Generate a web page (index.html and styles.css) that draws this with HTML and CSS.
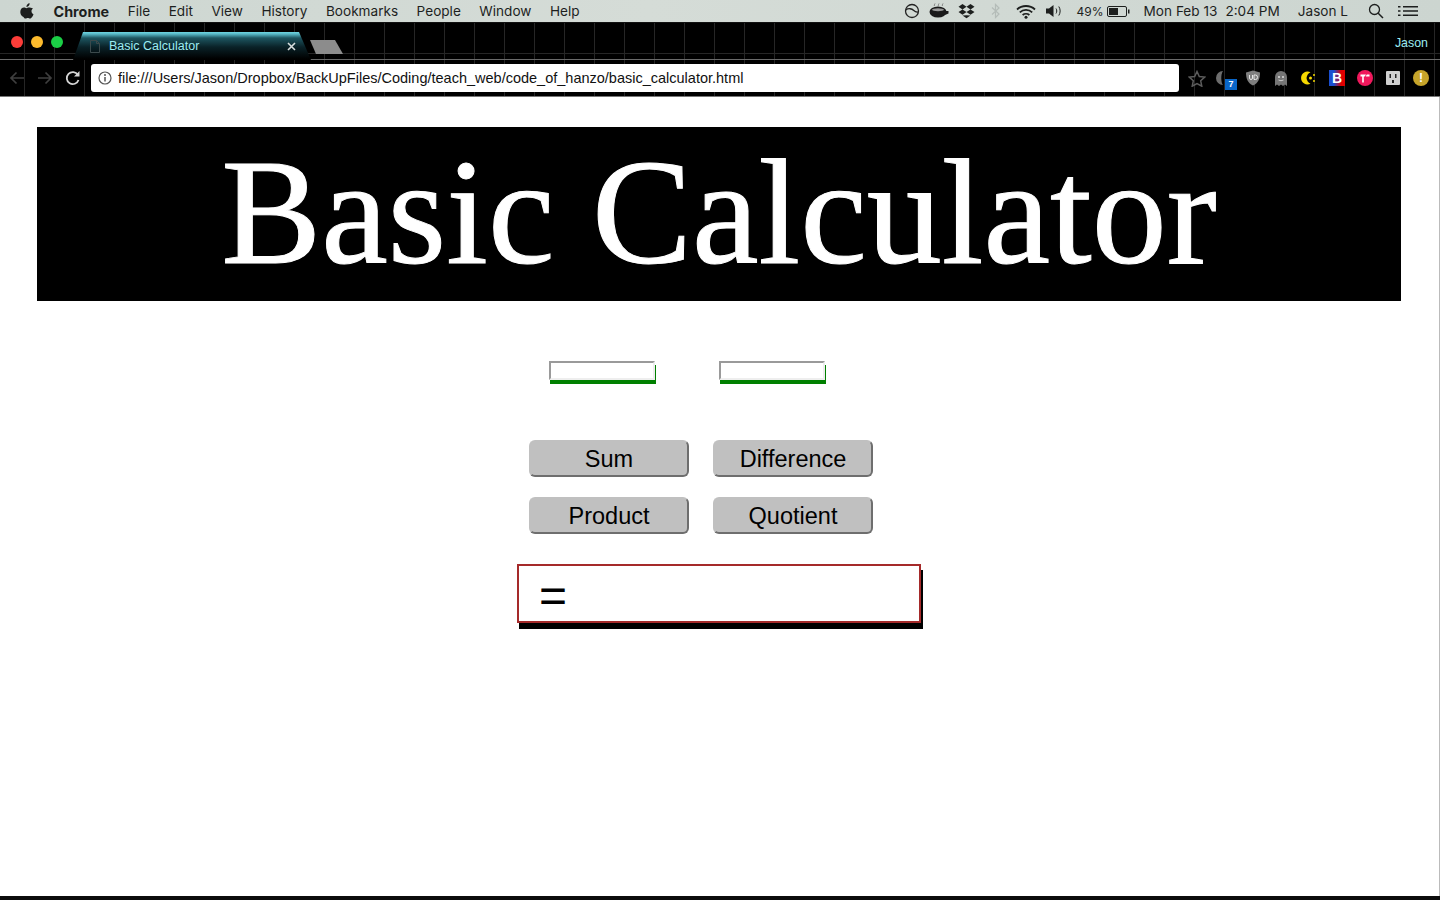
FILE: index.html
```html
<!DOCTYPE html>
<html lang="en">
<head>
    <meta charset="UTF-8">
    <meta name="viewport" content="width=device-width, initial-scale=1.0">
    <title>Basic Calculator</title>
    <link rel="stylesheet" href="styles.css">
</head>
<body>
    <!-- mac menu bar -->
    <div class="menubar">
        <div class="menu-left">
            <svg class="apple" width="14" height="16" viewBox="0 0 14 16"><path d="M9.600 0.300c.1 1-.3 1.900-.8 2.500-.6.700-1.400 1.200-2.300 1.100-.1-.9.3-1.900.8-2.400C7.900.8 8.900.3 9.600.3zM13 5.600c-.9.600-1.500 1.500-1.500 2.700 0 1.400.8 2.400 2 2.900-.3 1-.8 1.900-1.400 2.800-.6.800-1.200 1.600-2.100 1.600-.9 0-1.200-.5-2.200-.5s-1.400.5-2.200.5c-.9 0-1.600-.9-2.200-1.700C1 12.700.3 10.800.3 9c0-2.900 1.900-4.400 3.700-4.400 1 0 1.800.6 2.400.6.600 0 1.500-.7 2.700-.7.500 0 2.500.1 3.900 1.100z" fill="#1d1f1e"/></svg>
            <span class="menu-app">Chrome</span>
            <span>File</span>
            <span>Edit</span>
            <span>View</span>
            <span>History</span>
            <span>Bookmarks</span>
            <span>People</span>
            <span>Window</span>
            <span>Help</span>
        </div>
        <div class="menu-right">
            <svg class="st-sync" width="16" height="16" viewBox="0 0 16 16"><circle cx="8" cy="8" r="6.500" fill="none" stroke="#222" stroke-width="1.300"/><path d="M1.800 7c2.500-2 6-1.500 8 .5 1.200 1.200 2.500 1.800 4.200 1.500" fill="none" stroke="#222" stroke-width="1.300"/></svg>
            <svg class="st-cup" width="20" height="16" viewBox="0 0 20 16"><path d="M5 3c1-1 0-1.500 1-2.500M9 3c1-1 0-1.500 1-2.500M13 3c1-1 0-1.500 1-2.500" fill="none" stroke="#777" stroke-width="1"/><ellipse cx="9" cy="9" rx="8.500" ry="5.500" fill="#1a1a1a"/><ellipse cx="9" cy="6.800" rx="6" ry="1.500" fill="#999"/><path d="M17 8h2.500v2.500L16 12z" fill="#1a1a1a"/></svg>
            <svg class="st-dropbox" width="17" height="16" viewBox="0 0 17 16"><path d="M4.500 1L.5 3.700l4 2.700 4-2.700zM12.500 1l-4 2.700 4 2.700 4-2.700zM.5 9.100l4 2.700 4-2.700-4-2.700zM12.500 6.400l-4 2.700 4 2.700 4-2.700zM4.500 12.600l4 2.700 4-2.700-4-.3-4 .3z" fill="#1d1f1e"/></svg>
            <svg class="st-bt" width="9" height="16" viewBox="0 0 9 16"><path d="M1 4.500l7 6.500-3.500 3.500V1.500L8 5l-7 6.500" fill="none" stroke="#b4bcb8" stroke-width="1.200"/></svg>
            <svg class="st-wifi" width="20" height="15" viewBox="0 0 20 15"><path d="M1 5.500c5-4.700 13-4.700 18 0M3.800 8.300c3.500-3.200 8.900-3.200 12.400 0M6.600 11c1.900-1.600 4.900-1.600 6.800 0" fill="none" stroke="#1d1f1e" stroke-width="1.800"/><circle cx="10" cy="13.300" r="1.500" fill="#1d1f1e"/></svg>
            <svg class="st-vol" width="17" height="14" viewBox="0 0 17 14"><path d="M0 4.500h3L7.500 1v12L3 9.500H0z" fill="#1d1f1e"/><path d="M10 4.500c1 1.500 1 3.500 0 5M12.800 2.500c1.800 2.800 1.800 6.200 0 9" fill="none" stroke="#1d1f1e" stroke-width="1"/></svg>
            <span class="st-pct">49%</span>
            <svg class="st-battery" width="23" height="11" viewBox="0 0 23 11"><rect x=".5" y=".5" width="19" height="10" rx="1.500" fill="none" stroke="#1d1f1e"/><rect x="2" y="2" width="9" height="7" fill="#1d1f1e"/><rect x="21" y="3.500" width="1.500" height="4" fill="#1d1f1e"/></svg>
            <span class="st-date">Mon Feb 13</span>
            <span class="st-time">2:04 PM</span>
            <span class="st-user">Jason L</span>
            <svg class="st-search" width="16" height="16" viewBox="0 0 16 16"><circle cx="6.500" cy="6.500" r="5" fill="none" stroke="#1d1f1e" stroke-width="1.300"/><path d="M10.200 10.200l4.800 4.800" stroke="#1d1f1e" stroke-width="1.500"/></svg>
            <svg class="st-list" width="20" height="12" viewBox="0 0 20 12"><path d="M0 1h2.500v1.500H0zM0 5.200h2.500v1.500H0zM0 9.500h2.500V11H0zM5 1h15v1.500H5zM5 5.200h15v1.500H5zM5 9.500h15V11H5z" fill="#1d1f1e"/></svg>
        </div>
    </div>

    <!-- browser frame -->
    <div class="browser">
        <div class="tabstrip">
            <div class="traffic">
                <i class="dot red"></i>
                <i class="dot yellow"></i>
                <i class="dot green"></i>
            </div>
            <div class="tab">
                <svg class="tab-page" width="10" height="13" viewBox="0 0 10 13"><path d="M.5.5h6l3 3v9H.5zM6.500.5v3h3" fill="none" stroke="#3c4a4c"/></svg>
                <span class="tab-title">Basic Calculator</span>
                <svg class="tab-close" width="9" height="9" viewBox="0 0 9 9"><path d="M1 1l7 7M8 1L1 8" stroke="#d8dede" stroke-width="1.600"/></svg>
            </div>
            <div class="newtab"></div>
            <span class="profile">Jason</span>
        </div>
        <div class="toolbar">
            <div class="tool"><svg width="16" height="14" viewBox="0 0 16 14"><path d="M15 7H2M7.500 1.500L2 7l5.500 5.500" fill="none" stroke="#3f3f3f" stroke-width="1.700"/></svg></div>
            <div class="tool"><svg width="16" height="14" viewBox="0 0 16 14"><path d="M1 7h13M8.500 1.500L14 7l-5.500 5.500" fill="none" stroke="#3f3f3f" stroke-width="1.700"/></svg></div>
            <div class="tool"><svg width="16" height="16" viewBox="0 0 16 16"><path d="M13.500 10a6 6 0 1 1-.6-5" fill="none" stroke="#d6d6d6" stroke-width="1.800"/><path d="M14.500 1v5.500H9z" fill="#d6d6d6"/></svg></div>
            <div class="address">
                <svg class="info" width="14" height="14" viewBox="0 0 14 14"><circle cx="7" cy="7" r="6" fill="none" stroke="#555" stroke-width="1.200"/><path d="M7 6v4.500" stroke="#555" stroke-width="1.500"/><circle cx="7" cy="3.900" r="1" fill="#555"/></svg>
                <span class="url">file:///Users/Jason/Dropbox/BackUpFiles/Coding/teach_web/code_of_hanzo/basic_calculator.html</span>
            </div>
            <div class="extensions">
                <div class="tool"><svg width="18" height="17" viewBox="0 0 18 17"><path d="M9 1.500l2.300 5 5.400.6-4 3.700 1.100 5.400L9 13.500l-4.800 2.700 1.100-5.400-4-3.700 5.400-.6z" fill="none" stroke="#5c5c5c" stroke-width="1.500"/></svg></div>
                <div class="tool ext-moon">
                    <svg width="14" height="16" viewBox="0 0 14 16"><path d="M8 1a7 7 0 0 0 0 14c-2-2-2.500-11 0-14z" fill="#6d6d6d"/></svg>
                    <span class="ext-count">7</span>
                </div>
                <div class="tool"><svg width="14" height="16" viewBox="0 0 14 16"><path d="M7 .5L14 2.500c0 6-1.500 10.500-7 13C1.500 13 0 8.500 0 2.500z" fill="#7f7f7f"/><path d="M3.500 5v3q0 1.500 1.500 1.500T6.500 8V5M8 5v4.500h1.500q2 0 2-2.250T9.500 5z" fill="none" stroke="#e6e6e6" stroke-width="1"/></svg></div>
                <div class="tool"><svg width="12" height="15" viewBox="0 0 12 15"><path d="M0 15V6a6 6 0 0 1 12 0v9l-2-1.500-2 1.500-2-1.500-2 1.500-2-1.500z" fill="#757575"/><circle cx="4" cy="6" r="1" fill="#ddd"/><circle cx="8" cy="6" r="1" fill="#ddd"/><path d="M3.500 9q2.500 1.500 5 0" fill="none" stroke="#ddd" stroke-width=".8"/></svg></div>
                <div class="tool"><svg width="16" height="14" viewBox="0 0 16 14"><path d="M9.500 1.200a6.500 6.500 0 1 0 0 11.600A7.500 7.500 0 0 1 5.500 7a7.500 7.500 0 0 1 4-5.800z" fill="#f6d800"/><circle cx="9.500" cy="7" r="1.500" fill="#f6d800"/><circle cx="13" cy="4" r="1" fill="#f6d800"/><circle cx="13" cy="10" r="1" fill="#f6d800"/></svg></div>
                <div class="tool"><span class="ext-b">B</span></div>
                <div class="tool"><svg width="16" height="16" viewBox="0 0 16 16"><circle cx="8" cy="8" r="8" fill="#f0185c"/><path d="M3.500 4.500h5.500L7.800 6.500H6.800V12.500H5.200V6.500H3.500zM9.800 4.500h2.700v2h-3.800z" fill="#fff"/></svg></div>
                <div class="tool"><svg width="14" height="14" viewBox="0 0 14 14"><rect width="14" height="14" rx="1" fill="#cfcfcf"/><path d="M3.500 3h1.500v4H3.500zM9 3h1.500v4H9zM6 9h2v3H6z" fill="#222"/></svg></div>
                <div class="tool"><span class="ext-round ext-warn">!</span></div>
            </div>
        </div>
    </div>

    <!-- the actual page -->
    <div class="page">
        <h1 class="banner">Basic Calculator</h1>

        <div class="inputs">
            <input type="text" class="num-input">
            <input type="text" class="num-input">
        </div>

        <div class="buttons">
            <button type="button">Sum</button>
            <button type="button">Difference</button>
        </div>
        <div class="buttons second">
            <button type="button">Product</button>
            <button type="button">Quotient</button>
        </div>

        <div class="result">=</div>
    </div>

    <div class="dock-edge"></div>
</body>
</html>
```

FILE: styles.css
```css
html, body {
    margin: 0;
    padding: 0;
    height: 900px;
    overflow: hidden;
    background: #fff;
    font-family: "Liberation Sans", Arial, sans-serif;
}

/* menu bar */
.menubar {
    height: 22px;
    display: flex;
    justify-content: space-between;
    align-items: center;
    background: linear-gradient(90deg, #cdd6d1, #d5dcd7 45%, #ccd5d0);
    color: #1d1f1e;
    font-family: "Inter", "Liberation Sans", sans-serif;
    font-size: 13.6px;
    border-bottom: 1px solid #111;
}
.menu-left {
    display: flex;
    align-items: center;
    gap: 18.5px;
    padding-left: 20px;
}
.apple {
    margin-right: 1px;
}
.menu-app {
    font-weight: 700;
    font-size: 14.4px;
}
.menu-right {
    display: flex;
    align-items: center;
    padding-right: 22px;
}
.st-cup { margin-left: 9px; }
.st-dropbox { margin-left: 9px; }
.st-bt { margin-left: 16px; }
.st-wifi { margin-left: 16px; }
.st-vol { margin-left: 10px; }
.st-pct { margin-left: 14px; font-size: 12px; }
.st-battery { margin-left: 3px; }
.st-date { margin-left: 14px; }
.st-time { margin-left: 8px; }
.st-user { margin-left: 18px; }
.st-search { margin-left: 20px; }
.st-list { margin-left: 14px; }

/* browser frame */
.browser {
    height: 74px;
    box-sizing: border-box;
    background-color: #000;
    background-image:
        repeating-linear-gradient(90deg, transparent 0 24px, #262626 24px 25px, transparent 25px 30px),
        repeating-linear-gradient(180deg, transparent 0 30px, #262626 30px 31px, transparent 31px 60px);
    border-bottom: 1px solid #777;
}
.tabstrip {
    height: 37px;
    box-sizing: border-box;
    display: flex;
    border-bottom: 1px solid #6a6a6a;
}
.traffic {
    display: flex;
    gap: 8px;
    padding: 13px 0 0 11px;
}
.dot {
    width: 12px;
    height: 12px;
    border-radius: 50%;
}
.red { background: #fc3d39; }
.yellow { background: #fdbb2d; }
.green { background: #1bcf46; }
.tab {
    width: 238px;
    height: 28px;
    margin: 9px 0 -1px 10px;
    box-sizing: border-box;
    display: flex;
    align-items: center;
    padding: 0 15px 0 17px;
    clip-path: polygon(0 100%, 10px 0, 226px 0, 238px 100%);
    background: linear-gradient(180deg, #6fd6e2 0, #58b8c6 2px, #1d5560 6px, #0a2228 15px, #000 27px);
}
.tab-page {
    flex: none;
}
.tab-title {
    margin-left: 9px;
    flex: 1;
    color: #9cecf2;
    font-size: 12.5px;
}
.tab-close {
    flex: none;
}
.newtab {
    width: 33px;
    height: 14px;
    margin: 17px 0 0 -1px;
    background: #8c8c8c;
    clip-path: polygon(0 0, 25px 0, 33px 100%, 6px 100%);
}
.profile {
    margin: 13px 12px 0 auto;
    color: #9cecf2;
    font-size: 12.4px;
}
.toolbar {
    height: 36px;
    display: flex;
    align-items: center;
    padding: 0 5px 0 3px;
}
.tool {
    width: 28px;
    height: 28px;
    flex: none;
    display: flex;
    align-items: center;
    justify-content: center;
    position: relative;
}
.address {
    flex: 1;
    height: 28px;
    margin-left: 4px;
    margin-right: 4px;
    box-sizing: border-box;
    display: flex;
    align-items: center;
    padding-left: 7px;
    background: #fff;
    border-radius: 3px;
}
.url {
    margin-left: 6px;
    color: #111;
    font-size: 14.5px;
    white-space: nowrap;
}
.extensions {
    display: flex;
}
.ext-moon svg {
    margin-left: -6px;
}
.ext-count {
    position: absolute;
    left: 14px;
    top: 15px;
    width: 12px;
    height: 11px;
    background: #0a66c8;
    color: #fff;
    font-size: 9px;
    font-weight: 700;
    line-height: 11px;
    text-align: center;
}
.ext-b {
    width: 16px;
    height: 16px;
    background: linear-gradient(90deg, #1a4fd0, #1a4fd0 30%, #e00000 75%);
    color: #fff;
    font-size: 14px;
    font-weight: 700;
    line-height: 16px;
    text-align: center;
}
.ext-round {
    width: 16px;
    height: 16px;
    border-radius: 50%;
    color: #fff;
    font-size: 12px;
    font-weight: 700;
    line-height: 16px;
    text-align: center;
}
.ext-warn { background: #c6a42a; }

/* calculator page */
.page {
    width: 1440px;
    height: 799px;
    box-sizing: border-box;
    padding: 30px 38px 0 37px;
    border-right: 1px solid #bbb;
    background: #fff;
}
.banner {
    margin: 0;
    height: 174px;
    background: #000;
    color: #fff;
    font-family: "Liberation Serif", "Times New Roman", serif;
    font-size: 150px;
    font-weight: 400;
    line-height: 171px;
    text-align: center;
    -webkit-text-stroke: 1px #fff;
}
.inputs {
    display: flex;
    gap: 64px;
    margin: 60px 0 0 512px;
}
.num-input {
    width: 106px;
    height: 19px;
    box-sizing: border-box;
    padding: 0;
    border: 2px solid #eee;
    border-top-color: #9a9a9a;
    border-left-color: #9a9a9a;
    background: #fff;
    box-shadow: 1px 4px 0 green;
}
.buttons {
    display: flex;
    gap: 24px;
    margin: 60px 0 0 492px;
}
.buttons.second {
    margin-top: 20px;
}
.buttons button {
    width: 160px;
    height: 37px;
    padding: 2px 0 0;
    background: #c0c0c0;
    color: #000;
    border: 2px solid #c0c0c0;
    border-right-color: #6e6e6e;
    border-bottom-color: #6e6e6e;
    border-radius: 6px;
    font-family: "Liberation Sans", Arial, sans-serif;
    font-size: 23.5px;
    cursor: pointer;
}
.result {
    width: 404px;
    height: 59px;
    margin: 30px 0 0 480px;
    box-sizing: border-box;
    padding: 2px 0 0 20px;
    border: 2px solid brown;
    box-shadow: 2px 6px 0 #000;
    background: #fff;
    color: #000;
    font-size: 48px;
    line-height: 55px;
}
.dock-edge {
    height: 4px;
    background: #0c0c0c;
}
```
